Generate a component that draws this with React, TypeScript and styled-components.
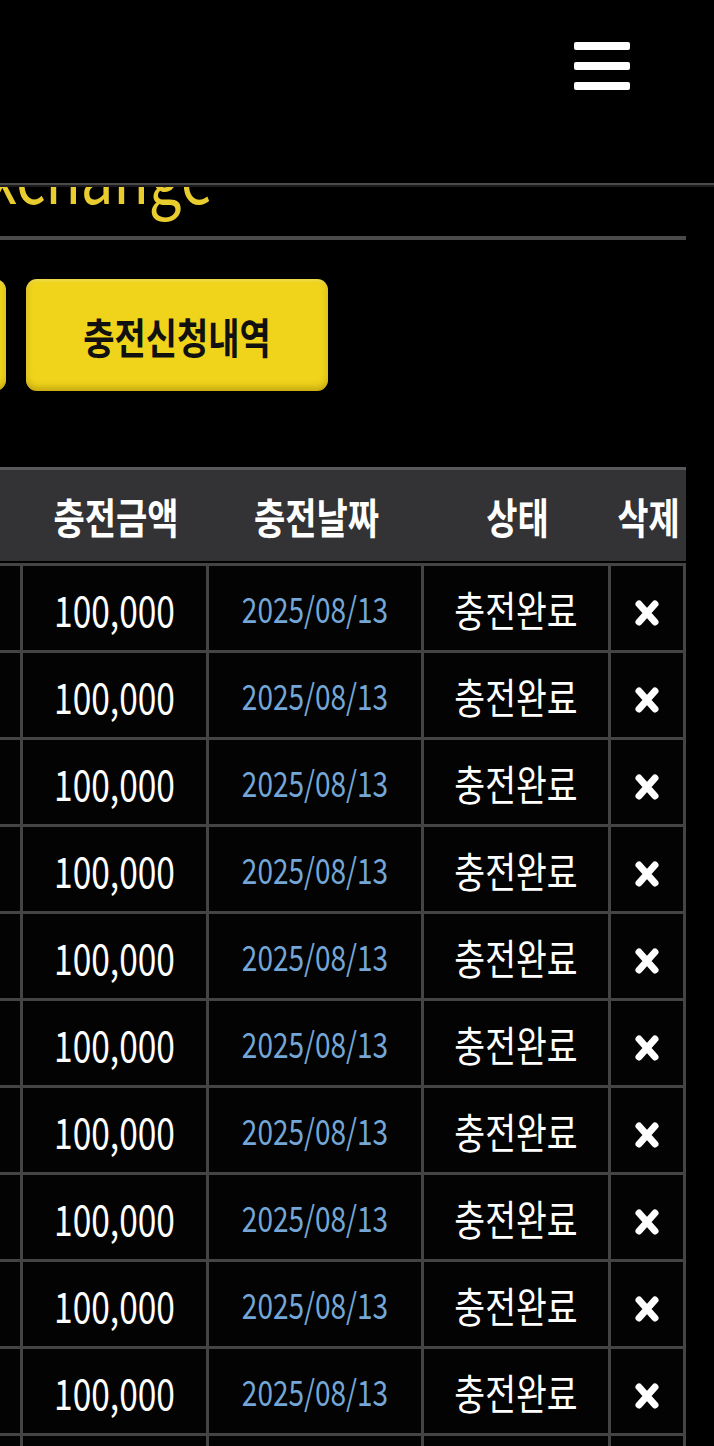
import styled, { createGlobalStyle } from 'styled-components';

const GlobalStyle = createGlobalStyle`
  html, body {
    margin: 0;
    padding: 0;
    background: #000;
  }
  body {
    font-family: 'Noto Sans CJK KR', 'Noto Sans', sans-serif;
    color: #fff;
  }
`;

// viewport-wide frame; the wider page inside is scrolled to its right end
const Viewport = styled.div`
  width: 100vw;
  height: 100vh;
  overflow: hidden;
  display: flex;
  justify-content: flex-end;
  background: #000;
`;

const Page = styled.main`
  flex-shrink: 0;
  width: 1038px;
  box-sizing: border-box;
  padding: 141px 28px 0;
`;

const Header = styled.header`
  position: fixed;
  top: 0;
  left: 0;
  right: 0;
  height: 185px;
  background: #000;
  border-bottom: 2px solid #4a4a4a;
  box-shadow: 0 2px 0 #1b1b1b;
  display: flex;
  justify-content: flex-end;
  align-items: flex-start;
  padding: 42px 84px 0 0;
  box-sizing: border-box;
  z-index: 10;
`;

const MenuButton = styled.button`
  background: none;
  border: 0;
  padding: 0;
  display: flex;
  flex-direction: column;
  gap: 12px;
  cursor: pointer;
`;

const MenuBar = styled.span`
  display: block;
  width: 56px;
  height: 8px;
  border-radius: 2px;
  background: #fff;
`;

// the text in this UI is drawn a little taller than wide
const Tall = styled.span`
  display: inline-block;
  transform: scaleY(1.25);
`;

const Title = styled.h1`
  margin: 0;
  padding-left: 252px;
  font-size: 58px;
  line-height: 64px;
  font-weight: 400;
  color: #e9cd2f;
  white-space: nowrap;
`;

const Rule = styled.hr`
  margin: 31px 0 0;
  border: 0;
  height: 4px;
  background: #4a4a4a;
`;

const ButtonRow = styled.div`
  display: flex;
  gap: 20px;
  margin-top: 39px;
`;

const TabButton = styled.button`
  width: 302px;
  height: 112px;
  border: 0;
  border-radius: 11px;
  background: #efd41b;
  box-shadow: inset 0 -4px 6px rgba(120, 90, 0, 0.35), inset 0 2px 3px rgba(255, 255, 255, 0.25);
  font-family: 'Noto Sans CJK KR', sans-serif;
  font-weight: 700;
  font-size: 34px;
  color: #111;
  cursor: pointer;
`;

const Table = styled.table`
  margin-top: 76px;
  width: 100%;
  table-layout: fixed;
  border-collapse: separate;
  border-spacing: 0;
`;

const Th = styled.th`
  height: 91px;
  padding: 0;
  background: #333235;
  border-top: 3px solid #58575a;
  border-bottom: 2px solid #000;
  font-size: 34px;
  font-weight: 700;
  color: #fff;
  text-align: center;
  white-space: nowrap;
`;

const Td = styled.td<{ $tone?: 'date' }>`
  height: 84px;
  padding: 0;
  border-right: 3px solid #444;
  border-bottom: 3px solid #444;
  text-align: center;
  font-size: ${(p) => (p.$tone === 'date' ? '28px' : '33.5px')};
  color: ${(p) => (p.$tone === 'date' ? '#74a7d8' : '#fff')};
  background: #030303;
  white-space: nowrap;

  &:first-child {
    border-left: 3px solid #444;
  }
  tr:first-child > & {
    border-top: 3px solid #444;
  }
`;

const DeleteButton = styled.button`
  background: none;
  border: 0;
  padding: 0;
  display: inline-flex;
  vertical-align: middle;
  cursor: pointer;
`;

const columns = [
  { label: '번호', width: 120 },
  { label: '입금자명', width: 199 },
  { label: '충전금액', width: 186 },
  { label: '충전날짜', width: 215 },
  { label: '상태', width: 187 },
  { label: '삭제', width: 75 },
];

const rows = Array.from({ length: 12 }, (_, i) => ({
  id: 12 - i,
  name: '홍길동',
  amount: '100,000',
  date: '2025/08/13',
  status: '충전완료',
}));

const CrossIcon = () => (
  <svg width="28" height="30" viewBox="0 0 28 30">
    <path d="M6 6 L22 24 M22 6 L6 24" stroke="#fff" strokeWidth="7" strokeLinecap="round" />
  </svg>
);

const App = () => (
  <>
    <GlobalStyle />
    <Header>
      <MenuButton aria-label="menu">
        <MenuBar />
        <MenuBar />
        <MenuBar />
      </MenuButton>
    </Header>
    <Viewport>
      <Page>
        <Title>
          <Tall>Exchange</Tall>
        </Title>
        <Rule />
        <ButtonRow>
          <TabButton>
            <Tall>충전신청</Tall>
          </TabButton>
          <TabButton>
            <Tall>충전신청내역</Tall>
          </TabButton>
        </ButtonRow>
        <Table>
          <colgroup>
            {columns.map((c) => (
              <col key={c.label} style={{ width: c.width }} />
            ))}
          </colgroup>
          <thead>
            <tr>
              {columns.map((c) => (
                <Th key={c.label}>
                  <Tall>{c.label}</Tall>
                </Th>
              ))}
            </tr>
          </thead>
          <tbody>
            {rows.map((r) => (
              <tr key={r.id}>
                <Td><Tall>{r.id}</Tall></Td>
                <Td><Tall>{r.name}</Tall></Td>
                <Td><Tall>{r.amount}</Tall></Td>
                <Td $tone="date"><Tall>{r.date}</Tall></Td>
                <Td><Tall>{r.status}</Tall></Td>
                <Td>
                  <DeleteButton aria-label="삭제">
                    <CrossIcon />
                  </DeleteButton>
                </Td>
              </tr>
            ))}
          </tbody>
        </Table>
      </Page>
    </Viewport>
  </>
);

export default App;
